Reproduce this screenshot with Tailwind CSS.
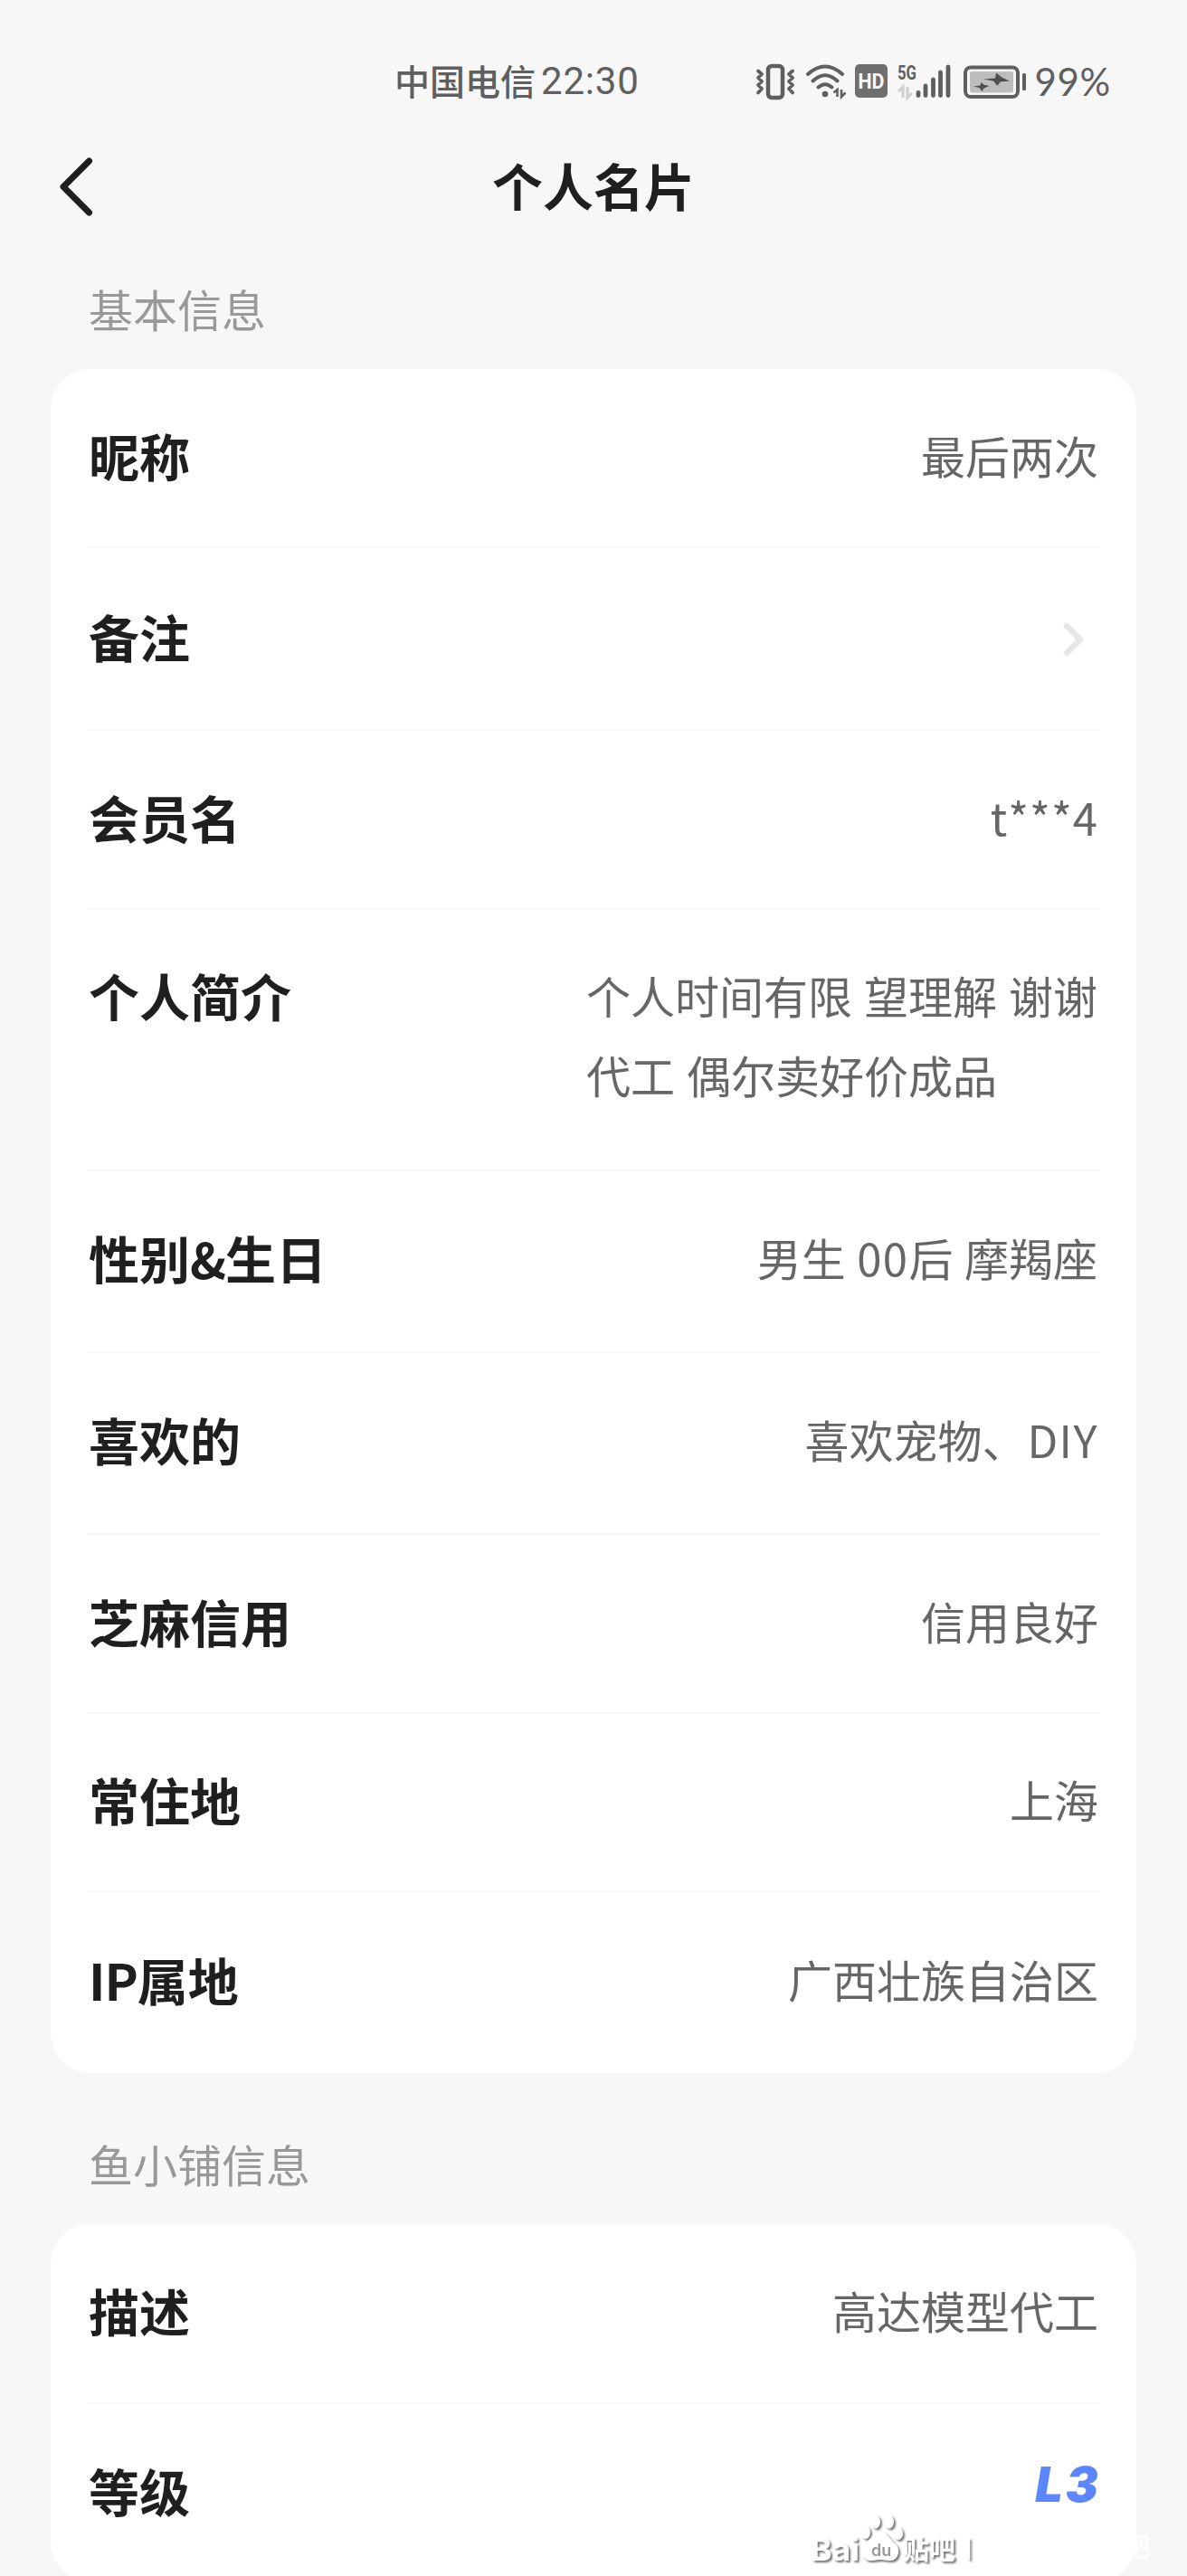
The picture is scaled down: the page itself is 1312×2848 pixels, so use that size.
<!DOCTYPE html>
<html lang="zh-CN">
<head>
  <meta charset="UTF-8" />
  <meta name="viewport" content="width=device-width, initial-scale=1.0"/>
  <title>个人名片</title>
  <script src="https://cdn.jsdelivr.net/npm/@tailwindcss/browser@4"></script>
</head>
<body class="bg-[#f7f7f7] font-['Noto_Sans_CJK_SC',sans-serif] text-[#1f1f1f]">
  <div class="relative w-[1312px] h-[2848px] overflow-hidden">

    <!-- Status bar -->
    <div class="flex items-center h-[180px] pl-[436px] text-[#5f5f5f]">
      <span class="pb-[3px] text-[39px] leading-none font-medium">中国电信</span>
      <span class="font-[Roboto] text-[42px] leading-none ml-[6px] tracking-[0.8px]">22:30</span>
      <svg class="ml-[127px] shrink-0" width="300" height="44" viewBox="834 67 300 44" fill="none" stroke="#5f5f5f">
        <!-- vibrate -->
        <rect x="849" y="72" width="16" height="35" rx="4" stroke-width="4.5"/>
        <path d="M838 77.500l4 3.500-4 4 4 4-4 4 4 4-4 4.500M876 77.500l-4 3.500 4 4-4 4 4 4-4 4 4 4.500" stroke-width="3.800" stroke-linecap="round" stroke-linejoin="round"/>
        <!-- wifi -->
        <path d="M893 81Q912 64 931 81M898.500 88.500Q912 76 925.500 88.500M904.500 95.500Q912 89 919.500 95.500" stroke-width="4" stroke-linecap="round"/>
        <circle cx="912" cy="103" r="3.300" fill="#5f5f5f" stroke="none"/>
        <path d="M921.500 101.500l4-3.500v8M930 98v8l4.500-4.500" stroke-width="2.600"/>
        <!-- HD -->
        <rect x="945" y="70" width="36" height="37" rx="5" fill="#6f6f6f" stroke="none"/>
        <text x="963" y="97" text-anchor="middle" font-family="Roboto" font-weight="700" font-size="23" textLength="29" lengthAdjust="spacingAndGlyphs" fill="#f7f7f7" stroke="none">HD</text>
        <!-- 5G signal -->
        <text x="992" y="86.500" font-family="Roboto" font-weight="700" font-size="22" textLength="21" lengthAdjust="spacingAndGlyphs" fill="#5f5f5f" stroke="none">5G</text>
        <path d="M993 100l5-5v12M1003 95v12l5-5" stroke="#cfcfcf" stroke-width="3"/>
        <path d="M1015 101.500v3M1023 94v10.500M1031.500 87v17.500M1039.500 79v25.500M1048 73v31.500" stroke-width="4.800" stroke-linecap="round"/>
        <!-- battery -->
        <rect x="1067" y="73.500" width="58" height="32.500" rx="6" stroke-width="4"/>
        <rect x="1072" y="78" width="48" height="23.500" rx="3" fill="#bdbdbd" stroke="none"/>
        <path d="M1087 86.500L1100 85.500 1101 79.500 1108 85 1116 88.500 1105.500 89.500 1102.500 94 1098 88.500zM1076 94.500L1083.500 93.500 1084.500 90 1088 93 1093.500 94 1087.500 96.500 1085.500 100 1082.500 96z" fill="#4f4f4f" stroke="none"/>
        <rect x="1130" y="80" width="4" height="19" rx="1.500" fill="#5f5f5f" stroke="none"/>
      </svg>
      <span class="font-[Lato] text-[42px] leading-none ml-[10px] tracking-[0.6px]">99%</span>
    </div>

    <!-- Nav bar -->
    <div class="relative -mt-5 flex h-[96px] items-center justify-center">
      <svg class="absolute left-[60px] top-[10px]" width="48" height="72" viewBox="0 0 48 72" fill="none" stroke="#1f1f1f" stroke-width="7" stroke-linecap="round" stroke-linejoin="round">
        <path d="M38.500 8L10 36.500 38.500 65"/>
      </svg>
      <h1 class="pb-[9px] text-[56px] leading-none font-bold">个人名片</h1>
    </div>

    <h2 class="mt-[60px] pl-[98px] text-[49px] leading-[49px] text-[#999]">基本信息</h2>

    <!-- Basic info -->
    <div class="mx-14 mt-[43px] rounded-[44px] bg-white px-10 text-[49px] text-[#666]">
      <div class="flex h-[198px] items-center justify-between border-b-2 border-[#f7f7f7] px-[2px] pb-[7px]">
        <b class="text-[56px] text-[#1f1f1f]">昵称</b>
        <span>最后两次</span>
      </div>
      <div class="flex h-[202px] items-center justify-between border-b-2 border-[#f7f7f7] px-[2px] pb-[7px]">
        <b class="text-[56px] text-[#1f1f1f]">备注</b>
        <svg class="mt-[9px] mr-[13px]" width="28" height="44" viewBox="0 0 28 44" fill="none" stroke="#e6e6e6" stroke-width="6.500" stroke-linecap="round" stroke-linejoin="round">
          <path d="M6 7l15 15L6 37"/>
        </svg>
      </div>
      <div class="flex h-[198px] items-center justify-between border-b-2 border-[#f7f7f7] px-[2px] pb-[7px]">
        <b class="text-[56px] text-[#1f1f1f]">会员名</b>
        <span class="tracking-[1px]">t***4</span>
      </div>
      <div class="flex h-[289px] justify-between border-b-2 border-[#f7f7f7] px-[2px] pt-[50px] leading-[88px]">
        <b class="text-[56px] text-[#1f1f1f]">个人简介</b>
        <span class="mr-px [word-spacing:2px]">个人时间有限 望理解 谢谢<br>代工 偶尔卖好价成品</span>
      </div>
      <div class="flex h-[201px] items-center justify-between border-b-2 border-[#f7f7f7] px-[2px] pb-[9px]">
        <b class="text-[56px] text-[#1f1f1f]">性别<span class="-tracking-[1px] text-[54px]">&amp;</span>生日</b>
        <span class="mr-px [word-spacing:1.5px]">男生 <span class="tracking-[1.5px]">00</span>后 摩羯座</span>
      </div>
      <div class="flex h-[201px] items-center justify-between border-b-2 border-[#f7f7f7] px-[2px] pb-[9px]">
        <b class="text-[56px] text-[#1f1f1f]">喜欢的</b>
        <span>喜欢宠物、<span class="ml-px tracking-[1.5px]">DIY</span></span>
      </div>
      <div class="flex h-[198px] items-center justify-between border-b-2 border-[#f7f7f7] px-[2px] pb-[7px]">
        <b class="text-[56px] text-[#1f1f1f]">芝麻信用</b>
        <span>信用良好</span>
      </div>
      <div class="flex h-[197px] items-center justify-between border-b-2 border-[#f7f7f7] px-[2px] pb-[7px]">
        <b class="text-[56px] text-[#1f1f1f]">常住地</b>
        <span>上海</span>
      </div>
      <div class="flex h-[200px] items-center justify-between px-[2px] pb-[9px]">
        <b class="text-[56px] text-[#1f1f1f]"><span class="-tracking-[1px]">IP</span>属地</b>
        <span>广西壮族自治区</span>
      </div>
    </div>

    <h2 class="mt-[75px] pl-[98px] text-[49px] leading-[49px] text-[#999]">鱼小铺信息</h2>

    <!-- Shop info -->
    <div class="mx-14 mt-[43px] rounded-[44px] bg-white px-10 text-[49px] text-[#666]">
      <div class="flex h-[199px] items-center justify-between border-b-2 border-[#f7f7f7] px-[2px] pb-[7px]">
        <b class="text-[56px] text-[#1f1f1f]">描述</b>
        <span>高达模型代工</span>
      </div>
      <div class="flex h-[196px] items-center justify-between px-[2px] pb-[7px]">
        <b class="text-[56px] text-[#1f1f1f]">等级</b>
        <span class="mr-[-3px] mb-[11px] font-[Inter] text-[54px] leading-none font-black tracking-[3px] text-[#5c86ff] italic">L3</span>
      </div>
    </div>

    <!-- Watermark -->
    <svg class="absolute left-[880px] top-[2770px] drop-shadow-[2px_2px_1px_rgba(0,0,0,0.55)]" width="200" height="78" viewBox="880 2770 200 78" fill="#fff">
      <text x="896" y="2831" font-family="Inter" font-weight="700" font-size="34" textLength="54" lengthAdjust="spacingAndGlyphs">Bai</text>
      <path d="M973 2799c8 0 10 8 16 13 7 5 5 19-5 19-5 0-7-1-11-1s-6 1-11 1c-10 0-12-14-5-19 6-5 8-13 16-13z"/>
      <text x="963" y="2826" font-family="Inter" font-weight="600" font-size="18" fill="#999">du</text>
      <ellipse cx="957" cy="2800" rx="5" ry="7"/>
      <ellipse cx="968" cy="2788" rx="5" ry="7.500"/>
      <ellipse cx="983" cy="2788" rx="5" ry="7.500"/>
      <ellipse cx="993" cy="2801" rx="5" ry="7"/>
      <text x="998" y="2830" font-family="Noto Sans CJK SC" font-weight="700" font-size="29">贴吧</text>
      <rect x="1070" y="2806" width="2" height="24"/>
    </svg>
    <span class="absolute left-[1242px] top-[2800px] text-[29px] leading-none font-medium text-white">吧</span>
  </div>
</body>
</html>
